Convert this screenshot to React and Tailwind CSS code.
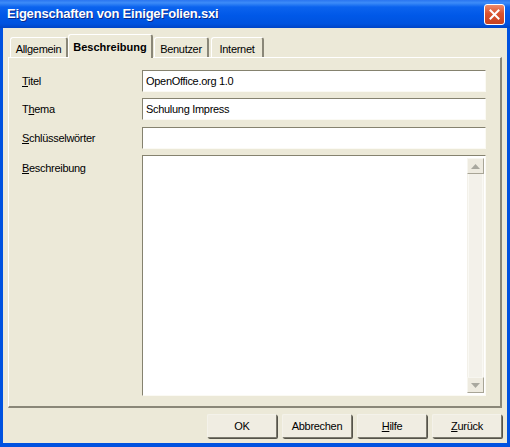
import React from 'react';

const font = { fontFamily: '"Liberation Sans", Arial, sans-serif' };

function Tab({ label, active, className = '' }) {
  if (active) {
    return (
      <div
        className={`relative z-10 -mb-px flex h-[24px] items-start justify-center rounded-t-[3px] border-l border-t border-white border-r-2 border-r-[#8a8778] bg-[#ECE9D8] pt-[4px] text-[11px] font-bold text-black ${className}`}
      >
        {label}
      </div>
    );
  }
  return (
    <div
      className={`flex h-[20px] items-start justify-center rounded-t-[3px] border-l border-t border-white border-r-2 border-r-[#8a8778] bg-[#ECE9D8] pt-[3px] text-[11px] tracking-[-0.3px] text-black ${className}`}
    >
      {label}
    </div>
  );
}

function Field({ value }) {
  return (
    <div className="flex h-[22px] items-center border-l border-t border-[#85826f] border-b border-r border-b-[#fbfaf4] border-r-[#fbfaf4] bg-white pl-[3px] text-[11px] tracking-[-0.3px] text-black">
      {value}
    </div>
  );
}

function ScrollButton({ up }) {
  return (
    <div className="flex h-[16px] w-[17px] items-center justify-center border border-[#f7f6f0] border-b-[#a8a596] border-r-[#a8a596] bg-[#EEEBE0]">
      <svg width="9" height="5" viewBox="0 0 9 5">
        {up ? (
          <polygon points="4.5,0 9,5 0,5" fill="#a9a89f" />
        ) : (
          <polygon points="0,0 9,0 4.5,5" fill="#a9a89f" />
        )}
      </svg>
    </div>
  );
}

function Button({ children }) {
  return (
    <button className="flex h-[24px] w-[70px] items-center justify-center rounded-[2px] border border-[#7c7a6e] border-l-[#f4f2ea] border-t-[#f4f2ea] bg-[#F0EDE2] text-[11px] tracking-[-0.3px] text-black shadow-[1px_1px_0_#55534a]">
      {children}
    </button>
  );
}

export default function App() {
  return (
    <div
      className="flex h-[447px] w-[510px] flex-col overflow-hidden bg-[#0052E0]"
      style={font}
    >
      {/* title bar */}
      <div className="flex h-[28px] shrink-0 items-center justify-between bg-[linear-gradient(to_bottom,#2a75f0_0%,#3d8cf8_10%,#0b63ee_25%,#0058e8_55%,#0053df_85%,#0044c6_100%)] pl-[7px] pr-[5px]">
        <div className="text-[13px] font-bold tracking-[-0.2px] text-white [text-shadow:1px_1px_0_#0b2a8a]">
          Eigenschaften von EinigeFolien.sxi
        </div>
        <div className="flex h-[21px] w-[21px] items-center justify-center rounded-[3px] border border-white bg-[linear-gradient(to_bottom,#ee8a6a,#d9532f_45%,#c8421f)]">
          <svg width="11" height="11" viewBox="0 0 11 11">
            <path d="M1.5 1.5 L9.5 9.5 M9.5 1.5 L1.5 9.5" stroke="#fff" strokeWidth="2" strokeLinecap="square" />
          </svg>
        </div>
      </div>

      {/* client */}
      <div className="mx-[3px] mb-[4px] flex flex-1 flex-col bg-[#ECE9D8] px-[5px] pt-[6px]">
        <div className="flex items-end pl-[2px]">
          <Tab label="Allgemein" className="w-[58px]" />
          <Tab label="Beschreibung" active className="w-[85px]" />
          <Tab label="Benutzer" className="ml-px w-[55px]" />
          <Tab label="Internet" className="ml-[2px] w-[53px]" />
        </div>

        <div className="h-[351px] border-l border-t border-white border-b-2 border-r-2 border-b-[#8a8778] border-r-[#8a8778] pl-[13px] pr-[14px] pt-[12px]">
          <div className="grid grid-cols-[120px_1fr] items-center gap-y-[6px] text-[11px] tracking-[-0.3px] text-black">
            <div>
              <span className="underline">T</span>itel
            </div>
            <Field value="OpenOffice.org 1.0" />
            <div>
              T<span className="underline">h</span>ema
            </div>
            <Field value="Schulung Impress" />
            <div className="mt-px">
              <span className="underline">S</span>chlüsselwörter
            </div>
            <div className="mt-px">
              <Field value="" />
            </div>
            <div className="self-start pt-[5px]">
              <span className="underline">B</span>eschreibung
            </div>
            <div className="flex h-[241px] justify-end border-l border-t border-[#85826f] border-b border-r border-b-[#fbfaf4] border-r-[#fbfaf4] bg-white py-[2px] pr-px">
              <div className="flex w-[17px] flex-col justify-between bg-[#F3F1EA]">
                <ScrollButton up />
                <div className="mx-auto w-[15px] flex-1 border-x border-[#faf9f4]" />
                <ScrollButton />
              </div>
            </div>
          </div>
        </div>

        <div className="mt-[6px] flex justify-end gap-[5px]">
          <Button>OK</Button>
          <Button>Abbrechen</Button>
          <Button>
            <span className="underline">H</span>ilfe
          </Button>
          <Button>
            <span className="underline">Z</span>urück
          </Button>
        </div>
      </div>
    </div>
  );
}
